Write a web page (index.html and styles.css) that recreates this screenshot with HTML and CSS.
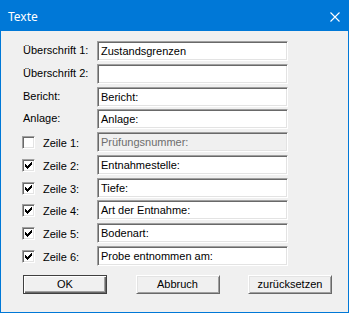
FILE: index.html
```html
<!DOCTYPE html>
<html>
<head>
<meta charset="utf-8">
<link rel="stylesheet" href="styles.css">
</head>
<body>
<div class="window">
  <div class="titlebar">
    <span class="title">Texte</span>
    <svg class="close" width="10" height="10" viewBox="0 0 10 10">
      <path d="M0.5 0.5L9.5 9.5M9.5 0.5L0.5 9.5" stroke="#fff" stroke-width="1.1" fill="none"/>
    </svg>
  </div>
  <div class="content">
    <div class="form">
      <div class="row"><span class="label">Überschrift 1:</span><div class="field">Zustandsgrenzen</div></div>
      <div class="row"><span class="label">Überschrift 2:</span><div class="field"></div></div>
      <div class="row"><span class="label">Bericht:</span><div class="field">Bericht:</div></div>
      <div class="row"><span class="label">Anlage:</span><div class="field">Anlage:</div></div>
      <div class="row">
        <div class="chk-label"><span class="checkbox"></span><span class="clabel">Zeile 1:</span></div>
        <div class="field disabled">Prüfungsnummer:</div>
      </div>
      <div class="row">
        <div class="chk-label"><span class="checkbox"><svg width="13" height="13" viewBox="0 0 13 13" shape-rendering="crispEdges"><path d="M3 5h1v3h-1zM4 6h1v3h-1zM5 7h1v3h-1zM6 6h1v3h-1zM7 5h1v3h-1zM8 4h1v3h-1zM9 3h1v3h-1z" fill="#000"/></svg></span><span class="clabel">Zeile 2:</span></div>
        <div class="field">Entnahmestelle:</div>
      </div>
      <div class="row">
        <div class="chk-label"><span class="checkbox"><svg width="13" height="13" viewBox="0 0 13 13" shape-rendering="crispEdges"><path d="M3 5h1v3h-1zM4 6h1v3h-1zM5 7h1v3h-1zM6 6h1v3h-1zM7 5h1v3h-1zM8 4h1v3h-1zM9 3h1v3h-1z" fill="#000"/></svg></span><span class="clabel">Zeile 3:</span></div>
        <div class="field">Tiefe:</div>
      </div>
      <div class="row">
        <div class="chk-label"><span class="checkbox"><svg width="13" height="13" viewBox="0 0 13 13" shape-rendering="crispEdges"><path d="M3 5h1v3h-1zM4 6h1v3h-1zM5 7h1v3h-1zM6 6h1v3h-1zM7 5h1v3h-1zM8 4h1v3h-1zM9 3h1v3h-1z" fill="#000"/></svg></span><span class="clabel">Zeile 4:</span></div>
        <div class="field">Art der Entnahme:</div>
      </div>
      <div class="row">
        <div class="chk-label"><span class="checkbox"><svg width="13" height="13" viewBox="0 0 13 13" shape-rendering="crispEdges"><path d="M3 5h1v3h-1zM4 6h1v3h-1zM5 7h1v3h-1zM6 6h1v3h-1zM7 5h1v3h-1zM8 4h1v3h-1zM9 3h1v3h-1z" fill="#000"/></svg></span><span class="clabel">Zeile 5:</span></div>
        <div class="field">Bodenart:</div>
      </div>
      <div class="row">
        <div class="chk-label"><span class="checkbox"><svg width="13" height="13" viewBox="0 0 13 13" shape-rendering="crispEdges"><path d="M3 5h1v3h-1zM4 6h1v3h-1zM5 7h1v3h-1zM6 6h1v3h-1zM7 5h1v3h-1zM8 4h1v3h-1zM9 3h1v3h-1z" fill="#000"/></svg></span><span class="clabel">Zeile 6:</span></div>
        <div class="field">Probe entnommen am:</div>
      </div>
    </div>
    <div class="buttons">
      <div class="btn default">OK</div>
      <div class="btn">Abbruch</div>
      <div class="btn">zurücksetzen</div>
    </div>
  </div>
</div>
</body>
</html>
```

FILE: styles.css
```css
html, body {
  margin: 0;
  padding: 0;
  overflow: hidden;
  background: #f0f0f0;
}

.window {
  box-sizing: border-box;
  width: 349px;
  height: 313px;
  border: 1px solid #0078d7;
  background: #f0f0f0;
  font-family: "Liberation Sans", Arial, sans-serif;
  font-size: 11px;
  color: #000;
  display: flex;
  flex-direction: column;
}

.titlebar {
  height: 30px;
  background: #0078d7;
  display: flex;
  align-items: center;
  justify-content: space-between;
  padding: 0 9px 0 8px;
  margin-top: -1px;
  margin-left: -1px;
  margin-right: -1px;
  padding-top: 1px;
}

.title {
  font-family: "Noto Sans", "Open Sans", sans-serif;
  font-size: 12px;
  color: #fff;
  line-height: 16px;
  margin-top: 1px;
}

.close {
  display: block;
  margin-top: 1px;
}

.content {
  padding: 10px 17px 0 21px;
}

.form {
  display: flex;
  flex-direction: column;
  gap: 2.78px;
}

.row {
  display: grid;
  grid-template-columns: 75px 191px;
  height: 20px;
}

.label {
  line-height: 18px;
  padding-left: 1px;
  white-space: nowrap;
}

.chk-label {
  display: flex;
  align-items: flex-start;
}

.checkbox {
  box-sizing: border-box;
  width: 13px;
  height: 13px;
  margin-top: 4px;
  background: #fff;
  border: 1px solid;
  border-color: #a0a0a0 #fff #fff #a0a0a0;
  box-shadow: inset 1px 1px #696969, inset -1px -1px #e3e3e3;
  position: relative;
  flex: none;
}

.checkbox svg {
  position: absolute;
  left: -1px;
  top: -1px;
}

.clabel {
  margin-left: 8px;
  line-height: 18px;
  padding-top: 2px;
  white-space: nowrap;
}

.field {
  box-sizing: border-box;
  height: 20px;
  background: #fff;
  border: 1px solid;
  border-color: #a0a0a0 #fff #fff #a0a0a0;
  box-shadow: inset 1px 1px #696969, inset -1px -1px #e3e3e3;
  padding: 1px 2px 0 3px;
  line-height: 16px;
  white-space: nowrap;
  overflow: hidden;
}

.field.disabled {
  background: #f0f0f0;
  color: #6d6d6d;
}

.buttons {
  display: flex;
  justify-content: space-between;
  margin-top: 9px;
  padding-left: 1px;
  width: 309px;
}

.btn {
  box-sizing: border-box;
  width: 84px;
  height: 19px;
  border: 1px solid;
  border-color: #fff #696969 #696969 #fff;
  box-shadow: inset 1px 1px #e3e3e3, inset -1px -1px #a0a0a0;
  background: #f0f0f0;
  text-align: center;
  line-height: 17px;
}

.btn.default {
  border-color: #404040;
  box-shadow: inset 1px 1px #fff, inset -1px -1px #696969, inset -2px -2px #a0a0a0;
}
```
